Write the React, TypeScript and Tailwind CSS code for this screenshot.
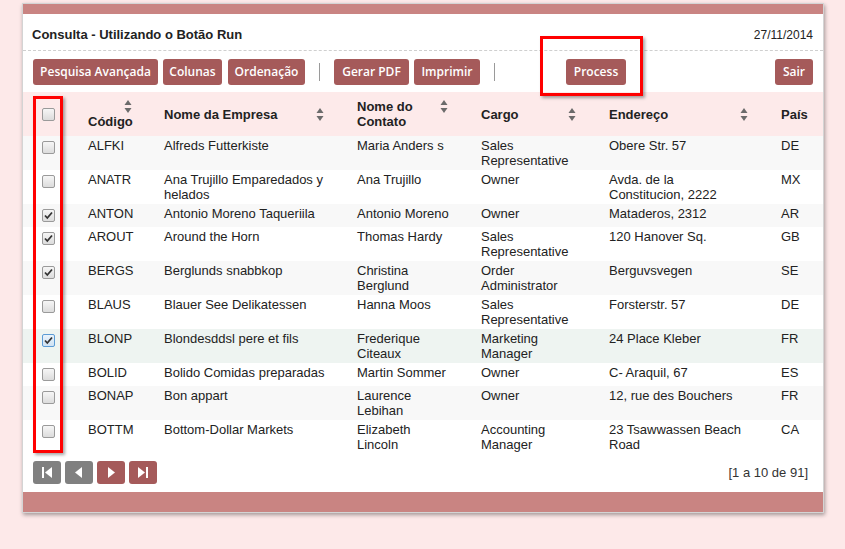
import React from 'react';

type Row = {
  code: string;
  company: string;
  contact: string;
  title: string;
  address: string;
  country: string;
  checked?: boolean;
  focus?: boolean;
};

const ROWS: Row[] = [
  { code: 'ALFKI', company: 'Alfreds Futterkiste', contact: 'Maria Anders s', title: 'Sales Representative', address: 'Obere Str. 57', country: 'DE' },
  { code: 'ANATR', company: 'Ana Trujillo Emparedados y helados', contact: 'Ana Trujillo', title: 'Owner', address: 'Avda. de la Constitucion, 2222', country: 'MX' },
  { code: 'ANTON', company: 'Antonio Moreno Taqueriila', contact: 'Antonio Moreno', title: 'Owner', address: 'Mataderos, 2312', country: 'AR', checked: true },
  { code: 'AROUT', company: 'Around the Horn', contact: 'Thomas Hardy', title: 'Sales Representative', address: '120 Hanover Sq.', country: 'GB', checked: true },
  { code: 'BERGS', company: 'Berglunds snabbkop', contact: 'Christina Berglund', title: 'Order Administrator', address: 'Berguvsvegen', country: 'SE', checked: true },
  { code: 'BLAUS', company: 'Blauer See Delikatessen', contact: 'Hanna Moos', title: 'Sales Representative', address: 'Forsterstr. 57', country: 'DE' },
  { code: 'BLONP', company: 'Blondesddsl pere et fils', contact: 'Frederique Citeaux', title: 'Marketing Manager', address: '24 Place Kleber', country: 'FR', checked: true, focus: true },
  { code: 'BOLID', company: 'Bolido Comidas preparadas', contact: 'Martin Sommer', title: 'Owner', address: 'C- Araquil, 67', country: 'ES' },
  { code: 'BONAP', company: 'Bon appart', contact: 'Laurence Lebihan', title: 'Owner', address: '12, rue des Bouchers', country: 'FR' },
  { code: 'BOTTM', company: 'Bottom-Dollar Markets', contact: 'Elizabeth Lincoln', title: 'Accounting Manager', address: '23 Tsawwassen Beach Road', country: 'CA' },
];

const Check: React.FC<{ checked?: boolean; focus?: boolean }> = ({ checked, focus }) => (
  <span
    className={`block w-[13px] h-[13px] rounded-[2px] border bg-linear-to-b ${
      focus ? 'border-[#5b9bd5] from-[#eaf3fb] to-[#cfe2f3]' : 'border-[#9a9a9a] from-[#f6f6f6] to-[#dcdcdc]'
    }`}
  >
    {checked && (
      <svg width="11" height="11" viewBox="0 0 11 11" className="block">
        <path d="M2 5.5 L4.3 8 L9 2.5" fill="none" stroke="#333" strokeWidth="1.8" />
      </svg>
    )}
  </span>
);

const SortIcon = () => (
  <svg width="8" height="15" viewBox="0 0 8 15" className="shrink-0 block">
    <polygon points="4,1 7.5,6 0.5,6" fill="#6b6b6b" />
    <polygon points="0.5,9 7.5,9 4,14" fill="#6b6b6b" />
  </svg>
);

const Btn: React.FC<{ w: string; children: React.ReactNode }> = ({ w, children }) => (
  <button className={`${w} h-[26px] rounded-[3px] bg-[#a55a5a] text-white text-[12px] font-semibold font-['Open_Sans',sans-serif] flex items-center justify-center`}>
    {children}
  </button>
);

const PageBtn: React.FC<{ gray?: boolean; kind: 'first' | 'prev' | 'next' | 'last' }> = ({ gray, kind }) => (
  <button className={`w-[28px] h-[23px] rounded-[3px] ${gray ? 'bg-[#808080]' : 'bg-[#a55a5a]'} flex items-center justify-center`}>
    <svg width="28" height="23" viewBox="0 0 28 23">
      {kind === 'first' && (
        <>
          <rect x="9" y="6" width="2" height="11" fill="#fff" />
          <polygon points="19,6 12,11.5 19,17" fill="#fff" />
        </>
      )}
      {kind === 'prev' && <polygon points="17,6 10,11.5 17,17" fill="#fff" />}
      {kind === 'next' && <polygon points="11,6 18,11.5 11,17" fill="#fff" />}
      {kind === 'last' && (
        <>
          <polygon points="9,6 16,11.5 9,17" fill="#fff" />
          <rect x="17" y="6" width="2" height="11" fill="#fff" />
        </>
      )}
    </svg>
  </button>
);

export default function App() {
  return (
    <div className="relative w-[845px] min-h-[549px] bg-[#fde9e9] pt-[3px] pl-[22px] font-['Liberation_Sans',Arial,sans-serif] text-[#222]">
      <div className="w-[802px] bg-white border border-[#d4d4d4] shadow-[1px_2px_4px_rgba(0,0,0,0.35)]">
        <div className="h-[10px] bg-[#c98482]" />

        <div className="flex items-center justify-between pl-[9px] pr-[10px] pt-[13px] pb-[7px] leading-[16px] border-b border-dashed border-[#cfcfcf]">
          <span className="text-[13px] font-bold">Consulta - Utilizando o Botão Run</span>
          <span className="text-[12px]">27/11/2014</span>
        </div>

        <div className="flex items-center pl-[10px] pr-[10px] pt-[8px] pb-[7px]">
          <Btn w="w-[125px]">Pesquisa Avançada</Btn>
          <div className="ml-[5px]"><Btn w="w-[59px]">Colunas</Btn></div>
          <div className="ml-[6px]"><Btn w="w-[77px]">Ordenação</Btn></div>
          <div className="mx-[14px] w-px h-[18px] bg-[#9a9a9a]" />
          <Btn w="w-[75px]">Gerar PDF</Btn>
          <div className="ml-[5px]"><Btn w="w-[66px]">Imprimir</Btn></div>
          <div className="mx-[14px] w-px h-[18px] bg-[#9a9a9a]" />
          <div className="ml-[57px]"><Btn w="w-[60px]">Process</Btn></div>
          <div className="ml-auto"><Btn w="w-[38px]">Sair</Btn></div>
        </div>

        <table className="w-[800px] table-fixed border-collapse text-[13px] leading-[15px]">
          <colgroup>
            <col className="w-[57px]" />
            <col className="w-[76px]" />
            <col className="w-[193px]" />
            <col className="w-[124px]" />
            <col className="w-[128px]" />
            <col className="w-[172px]" />
            <col className="w-[50px]" />
          </colgroup>
          <thead>
            <tr className="bg-[#fdeaea] h-[44px] text-left font-bold">
              <th className="p-0 pl-[19px] align-middle"><Check /></th>
              <th className="p-0 align-middle">
                <div className="flex flex-col pl-[8px] pr-[24px]">
                  <span className="self-end"><SortIcon /></span>
                  <span>Código</span>
                </div>
              </th>
              <th className="p-0 align-middle">
                <div className="flex items-start justify-between gap-2 pl-[8px] pr-[25px]">
                  <span>Nome da Empresa</span>
                  <SortIcon />
                </div>
              </th>
              <th className="p-0 align-middle">
                <div className="flex items-start justify-between gap-2 pl-[8px] pr-[25px]">
                  <span>Nome do Contato</span>
                  <SortIcon />
                </div>
              </th>
              <th className="p-0 align-middle">
                <div className="flex items-start justify-between gap-2 pl-[8px] pr-[25px]">
                  <span>Cargo</span>
                  <SortIcon />
                </div>
              </th>
              <th className="p-0 align-middle">
                <div className="flex items-start justify-between gap-2 pl-[8px] pr-[25px]">
                  <span>Endereço</span>
                  <SortIcon />
                </div>
              </th>
              <th className="p-0 pl-[8px] align-middle">País</th>
            </tr>
          </thead>
          <tbody>
            {ROWS.map((r, i) => (
              <tr
                key={r.code}
                className={r.focus ? 'bg-[#eef4f1]' : i % 2 === 0 ? 'bg-[#f8f8f8]' : 'bg-white'}
              >
                <td className="align-top pl-[19px] pt-[5px] pb-[5px]">
                  <Check checked={r.checked} focus={r.focus} />
                </td>
                <td className="align-top pl-[8px] pr-[20px] py-[2px]">{r.code}</td>
                <td className="align-top pl-[8px] pr-[20px] py-[2px]">{r.company}</td>
                <td className="align-top pl-[8px] pr-[20px] py-[2px]">{r.contact}</td>
                <td className="align-top pl-[8px] pr-[20px] py-[2px]">{r.title}</td>
                <td className="align-top pl-[8px] pr-[23px] py-[2px]">{r.address}</td>
                <td className="align-top pl-[8px] py-[2px]">{r.country}</td>
              </tr>
            ))}
          </tbody>
        </table>

        <div className="flex items-center pl-[10px] pr-[15px] pt-[7px] pb-[8px]">
          <div className="flex gap-[4px]">
            <PageBtn gray kind="first" />
            <PageBtn gray kind="prev" />
            <PageBtn kind="next" />
            <PageBtn kind="last" />
          </div>
          <span className="ml-auto text-[13px] text-[#333]">[1 a 10 de 91]</span>
        </div>

        <div className="h-[20px] bg-[#c98482]" />
      </div>

      {/* annotation boxes */}
      <div className="absolute left-[33px] top-[96px] w-[30px] h-[357px] border-[3px] border-[#ff0000] shadow-[2px_2px_3px_rgba(0,0,0,0.35)]" />
      <div className="absolute left-[540px] top-[36px] w-[103px] h-[60px] border-[3px] border-[#ff0000] shadow-[2px_2px_3px_rgba(0,0,0,0.35)]" />
    </div>
  );
}
